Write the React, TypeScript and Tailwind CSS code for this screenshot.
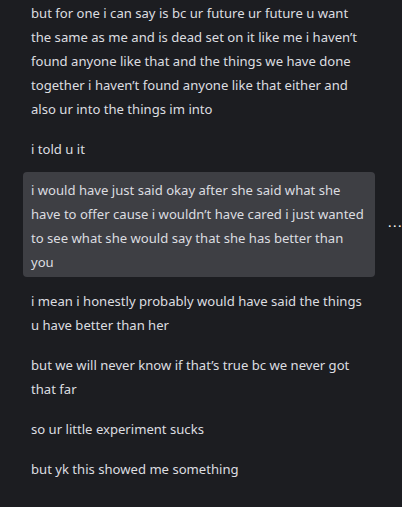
import React from "react";

const msgs = [
  "but for one i can say is bc ur future ur future u want the same as me and is dead set on it like me i haven\u2019t found anyone like that and the things we have done together i haven\u2019t found anyone like that either and also ur into the things im into",
  "i told u it",
  "i would have just said okay after she said what she have to offer cause i wouldn\u2019t have cared i just wanted to see what she would say that she has better than you",
  "i mean i honestly probably would have said the things u have better than her",
  "but we will never know if that\u2019s true bc we never got that far",
  "so ur little experiment sucks",
  "but yk this showed me something",
];

export default function App() {
  return (
    <div
      className="w-[402px] h-[507px] overflow-hidden bg-[#1c1d21] text-[#dcdde0] text-[13.1px] leading-6"
      style={{ fontFamily: '"Noto Sans", "Open Sans", sans-serif' }}
    >
      <div className="flex flex-col gap-2 pl-[23px] pr-[27px] -mt-[3px]">
        {msgs.map((m, i) => (
          <div key={i} className="relative">
            <div
              className={
                i === 2
                  ? "-mt-px px-2 pt-[6px] pb-[3px] rounded-[4px] bg-[#3e3f44]"
                  : "px-2 py-1"
              }
            >
              {m}
            </div>
            {i === 2 && (
              <div className="absolute left-[365px] top-[43px] text-white text-[13px] leading-none tracking-[1.5px]">
                ...
              </div>
            )}
          </div>
        ))}
      </div>
    </div>
  );
}
